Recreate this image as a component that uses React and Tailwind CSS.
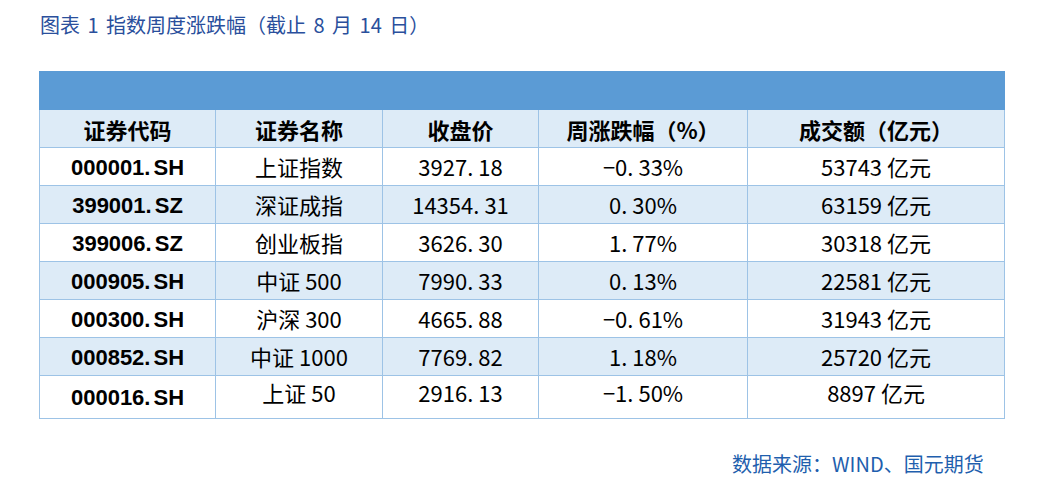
import React from "react";

const rows = [
  ["000001.SH", "上证指数", "3927.18", "-0.33%", "53743 亿元"],
  ["399001.SZ", "深证成指", "14354.31", "0.30%", "63159 亿元"],
  ["399006.SZ", "创业板指", "3626.30", "1.77%", "30318 亿元"],
  ["000905.SH", "中证 500", "7990.33", "0.13%", "22581 亿元"],
  ["000300.SH", "沪深 300", "4665.88", "-0.61%", "31943 亿元"],
  ["000852.SH", "中证 1000", "7769.82", "1.18%", "25720 亿元"],
  ["000016.SH", "上证 50", "2916.13", "-1.50%", "8897 亿元"],
];

const headers = ["证券代码", "证券名称", "收盘价", "周涨跌幅（%）", "成交额（亿元）"];

const cjk = { fontFamily: '"Noto Sans CJK SC", "Liberation Sans", sans-serif' };
const latin = { fontFamily: '"Liberation Sans", "Noto Sans CJK SC", sans-serif' };

// the source doc puts a wide gap after the decimal point
const withDot = (s, gap) => {
  const t = s.startsWith("-") ? "−" + s.slice(1) : s;
  const k = t.indexOf(".");
  if (k < 0) return t;
  return (
    <>
      {t.slice(0, k)}
      <span className={gap}>.</span>
      {t.slice(k + 1)}
    </>
  );
};

export default function App() {
  return (
    <div className="w-[1037px] h-[493px] bg-white relative" style={cjk}>
      <div className="pt-[11px] pl-[40px] text-[20px] leading-[28px] text-[#2a4f9c] [word-spacing:3px]">
        图表 1 指数周度涨跌幅（截止 8 月 14 日）
      </div>

      <table className="ml-[39px] mt-[32px] w-[965px] border-collapse table-fixed text-black">
        <colgroup>
          <col className="w-[176px]" />
          <col className="w-[167px]" />
          <col className="w-[156px]" />
          <col className="w-[209px]" />
          <col className="w-[257px]" />
        </colgroup>
        <tbody>
          <tr className="h-[38px]">
            <td colSpan={5} className="bg-[#5b9bd5] border border-[#5b9bd5]"></td>
          </tr>
          <tr className="h-[38px] bg-[#ddebf7]">
            {headers.map((h, i) => (
              <td
                key={i}
                className="border border-[#9dc3e6] text-center font-bold text-[22px] leading-none"
              >
                {h}
              </td>
            ))}
          </tr>
          {rows.map((r, i) => {
            const last = i === rows.length - 1;
            return (
              <tr
                key={i}
                className={(last ? "h-[43px] " : "h-[38px] ") + (i % 2 === 1 ? "bg-[#ddebf7]" : "bg-white")}
              >
                {r.map((c, j) => (
                  <td
                    key={j}
                    style={j === 0 ? latin : undefined}
                    className={
                      "border border-[#9dc3e6] text-center text-[22px] leading-none " +
                      (j === 0 ? "font-bold align-middle pt-[2px]" : last ? "align-top pt-[5px]" : "align-middle pb-[2px]")
                    }
                  >
                    {j === 0 ? withDot(c, "mr-[3px]") : j === 2 || j === 3 ? withDot(c, "mr-[5px]") : c}
                  </td>
                ))}
              </tr>
            );
          })}
        </tbody>
      </table>

      <div className="absolute left-[732px] top-[450px] text-[20px] leading-[28px] text-[#1f5fae]">
        数据来源：WIND、国元期货
      </div>
    </div>
  );
}
